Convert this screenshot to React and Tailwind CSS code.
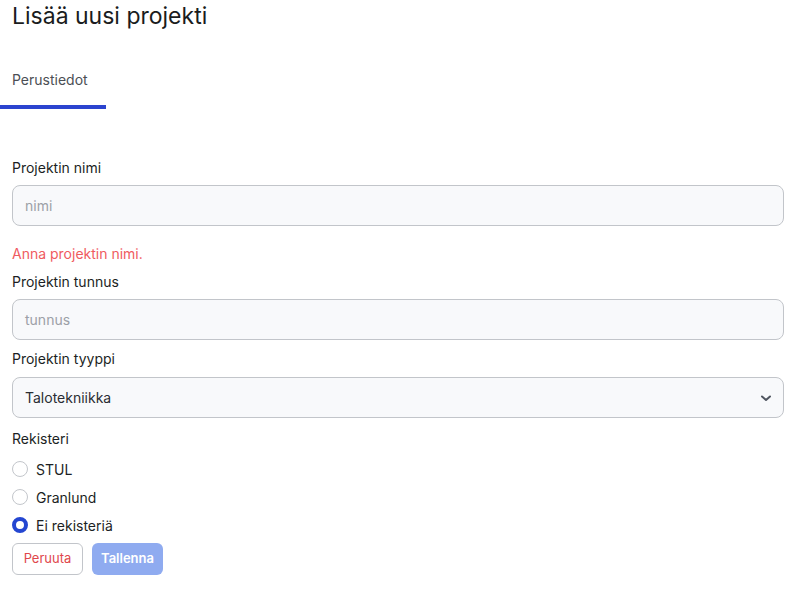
import React from "react";

function Radio({ checked, label }) {
  return (
    <label className="flex items-center gap-2 h-7">
      {checked ? (
        <span className="w-4 h-4 rounded-full border-[4.5px] border-[#2446d1] bg-white" />
      ) : (
        <span className="w-4 h-4 rounded-full border border-[#c3c6cb] bg-white" />
      )}
      <span className="text-[14px] text-[#1c1f24]">{label}</span>
    </label>
  );
}

export default function App() {
  return (
    <div className="w-[793px] h-[590px] bg-white font-['Inter',sans-serif] text-[#1c1f24]">
      <h1 className="pl-3 pt-[1px] text-[23px] leading-[30px] font-normal text-[#1a1c20]">Lisää uusi projekti</h1>
      <div className="mt-[39px] w-[106px]">
        <div className="pl-3 text-[14px] leading-[20px] text-[#4b4f55] pb-[15px]">Perustiedot</div>
        <div className="h-[4px] bg-[#2b44cf]" />
      </div>
      <div className="pl-3 pr-[9px] pt-[49px]">
        <div className="text-[14px] leading-[20px] mb-[7px]">Projektin nimi</div>
        <div className="h-[41px] rounded-lg border border-[#c2c5ca] bg-[#f8f9fb] flex items-center px-3 text-[14px] text-[#9ca0a7]">nimi</div>
        <div className="mt-[18px] text-[14px] leading-[20px] text-[#ef5b5f]">Anna projektin nimi.</div>
        <div className="mt-[8px] text-[14px] leading-[20px] mb-[7px]">Projektin tunnus</div>
        <div className="h-[41px] rounded-lg border border-[#c2c5ca] bg-[#f8f9fb] flex items-center px-3 text-[14px] text-[#9ca0a7]">tunnus</div>
        <div className="mt-[9px] text-[14px] leading-[20px] mb-[8px]">Projektin tyyppi</div>
        <div className="h-[41px] rounded-lg border border-[#c2c5ca] bg-[#f8f9fb] flex items-center justify-between px-3 text-[14px] text-[#2a2d33]">
          <span>Talotekniikka</span>
          <svg width="12" height="12" viewBox="0 0 12 12" className="mr-[-1px]">
            <path d="M2 4.5 L6 8 L10 4.5" fill="none" stroke="#505660" strokeWidth="2" strokeLinecap="round" strokeLinejoin="round" />
          </svg>
        </div>
        <div className="mt-[11px] text-[14px] leading-[20px]">Rekisteri</div>
        <div className="mt-[6px] flex flex-col">
          <Radio label="STUL" />
          <Radio label="Granlund" />
          <Radio checked label="Ei rekisteriä" />
        </div>
        <div className="mt-[4px] flex gap-[9px]">
          <button className="h-8 w-[71px] rounded-md border border-[#c2c5ca] bg-white text-[13px] text-[#e0474c]">Peruuta</button>
          <button className="h-8 w-[71px] rounded-md bg-[#8fabf0] text-[13px] font-semibold text-white">Tallenna</button>
        </div>
      </div>
    </div>
  );
}
